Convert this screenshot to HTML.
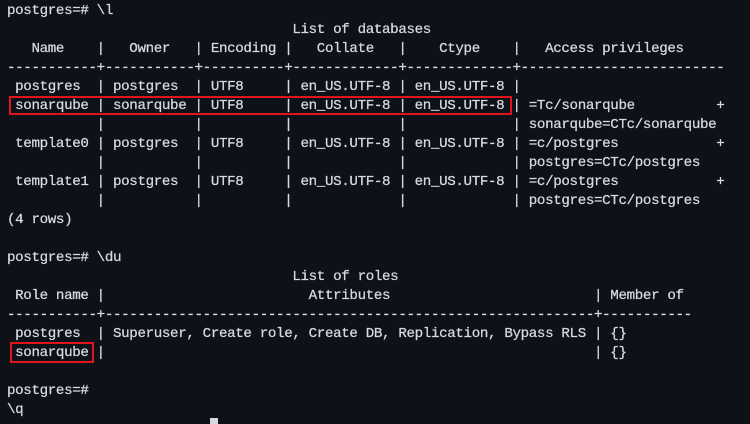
<!DOCTYPE html>
<html><head><meta charset="utf-8"><style>
html,body{margin:0;padding:0;background:#0e1118;width:750px;height:424px;overflow:hidden;position:relative}
pre{margin:0;position:absolute;left:7px;top:2px;font-family:"Liberation Mono",monospace;font-size:14px;letter-spacing:-0.35px;line-height:19px;color:#d8dade;white-space:pre;-webkit-text-stroke:0.25px #d8dade;transform:scaleX(1.0126);transform-origin:0 0}
.box{position:absolute;border:2px solid #e0141c;box-sizing:border-box}
.cur{position:absolute;left:210px;top:418px;width:8px;height:6px;background:#d6d8dc}
</style></head><body>
<pre>postgres=# \l
                                   List of databases
   Name    |   Owner   | Encoding |   Collate   |    Ctype    |   Access privileges
-----------+-----------+----------+-------------+-------------+-------------------------
 postgres  | postgres  | UTF8     | en_US.UTF-8 | en_US.UTF-8 |
 sonarqube | sonarqube | UTF8     | en_US.UTF-8 | en_US.UTF-8 | =Tc/sonarqube          +
           |           |          |             |             | sonarqube=CTc/sonarqube
 template0 | postgres  | UTF8     | en_US.UTF-8 | en_US.UTF-8 | =c/postgres            +
           |           |          |             |             | postgres=CTc/postgres
 template1 | postgres  | UTF8     | en_US.UTF-8 | en_US.UTF-8 | =c/postgres            +
           |           |          |             |             | postgres=CTc/postgres
(4 rows)

postgres=# \du
                                   List of roles
 Role name |                         Attributes                         | Member of
-----------+------------------------------------------------------------+-----------
 postgres  | Superuser, Create role, Create DB, Replication, Bypass RLS | {}
 sonarqube |                                                            | {}

postgres=#
\q</pre>
<div class="box" style="left:9px;top:96px;width:503px;height:19px"></div>
<div class="box" style="left:10px;top:342px;width:84px;height:21px"></div>
<div class="cur"></div>
</body></html>
